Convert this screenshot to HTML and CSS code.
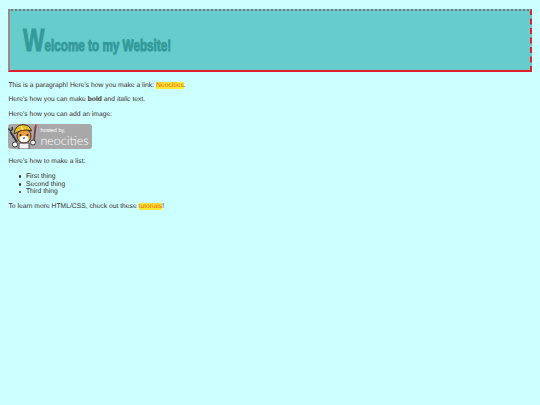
FILE: index.html
```html
<!DOCTYPE html>
<html lang="en">
<head>
    <meta charset="UTF-8">
    <title>My Website</title>
    <link rel="stylesheet" href="styles.css">
</head>
<body>
    <h1 class="banner"><span class="title"><span class="first">W</span>elcome to my Website!</span></h1>
    <p>This is a paragraph! Here's how you make a link: <a href="#">Neocities</a>.</p>
    <p>Here's how you can make <strong>bold</strong> and <em>italic</em> text.</p>
    <p>Here's how you can add an image:</p>
    <div class="badge">
        <svg class="mascot" viewBox="0 0 31 25" width="31" height="25">
            <path d="M2.5 8 L9 18" stroke="#333" stroke-width="2"/>
            <path d="M0.5 4.5 L2.5 7 L4.5 5.5 L4 3" fill="none" stroke="#333" stroke-width="1.4"/>
            <circle cx="7" cy="20.5" r="2.6" fill="#fff" stroke="#333" stroke-width="1"/>
            <path d="M11 19 h10 v6 h-10z" fill="#f2f2f2" stroke="#333" stroke-width=".8"/>
            <circle cx="16" cy="12" r="7" fill="#e8a040" stroke="#3a2a18" stroke-width="1"/>
            <path d="M6 10 Q7 1 15 .6 Q22 1 23.5 7 Q15 4 6 10Z" fill="#f0c020" stroke="#3a2a18" stroke-width="1"/>
            <path d="M13 2 L15 6" stroke="#fff0a0" stroke-width="1.4"/>
            <ellipse cx="16" cy="15" rx="4.5" ry="3.2" fill="#fff"/>
            <circle cx="12.5" cy="11" r="1" fill="#222"/>
            <circle cx="19.5" cy="11" r="1" fill="#222"/>
            <path d="M15 14 h2" stroke="#222" stroke-width="1.1"/>
            <path d="M27.5 2 L26 16" stroke="#7a3a3a" stroke-width="1.7"/>
            <path d="M27.8 0.5 L28 4" stroke="#c04040" stroke-width="1.6"/>
            <circle cx="25" cy="18.5" r="2.5" fill="#fff" stroke="#333" stroke-width="1"/>
        </svg>
        <div class="badge-text">
            <span class="hosted">hosted by,</span>
            <span class="neo">neocities</span>
        </div>
    </div>
    <p>Here's how to make a list:</p>
    <ul>
        <li>First thing</li>
        <li>Second thing</li>
        <li>Third thing</li>
    </ul>
    <p>To learn more HTML/CSS, check out these <a href="#">tutorials</a>!</p>
</body>
</html>
```

FILE: styles.css
```css
body {
    margin: 9px 8.4px;
    background: #ccffff;
    color: #402a2a;
    font-family: "Liberation Sans", Arial, sans-serif;
    font-size: 6.75px;
    line-height: 7.75px;
    text-rendering: geometricPrecision;
}

.banner {
    box-sizing: border-box;
    height: 63px;
    margin: 0 0 9.5px;
    padding: 14px 0 0 13px;
    background: #66cccc;
    border-top: 2px dotted #777;
    border-left: 2px solid #a08888;
    border-right: 2px dashed #e0202c;
    border-bottom: 2px solid #e0202c;
    color: #339999;
    font-size: 16.5px;
    line-height: 30px;
    white-space: nowrap;
}

.title {
    display: inline-block;
    transform: scaleX(0.71);
    transform-origin: left;
    -webkit-text-stroke: 0.9px #339999;
}

.first {
    font-size: 32px;
}

/* grey text edges, no colour fringe */
p, ul {
    opacity: 0.99;
}

p {
    margin: 0 0 6.75px;
}

a {
    background: #ffe92e;
    color: #f0641e;
    text-decoration: none;
}

.badge {
    display: flex;
    width: 84px;
    height: 25px;
    margin: -1px 0 8.5px;
    border-radius: 3px;
    background: #a8a8a8;
}

.badge-text {
    display: flex;
    flex-direction: column;
    padding: 4px 0 0 1px;
    color: #fff;
}

.hosted {
    font-size: 5.5px;
    line-height: 6px;
}

.neo {
    font-family: Lato, sans-serif;
    font-size: 12.5px;
    font-weight: 300;
    line-height: 13px;
}

ul {
    margin: 0 0 6.75px;
    padding: 0.75px 0 0 10.5px;
    list-style: none;
}

li {
    display: flex;
    align-items: center;
    gap: 4.5px;
}

li::before {
    content: '';
    width: 2.5px;
    height: 2.5px;
    border-radius: 50%;
    background: #402a2a;
}
```
